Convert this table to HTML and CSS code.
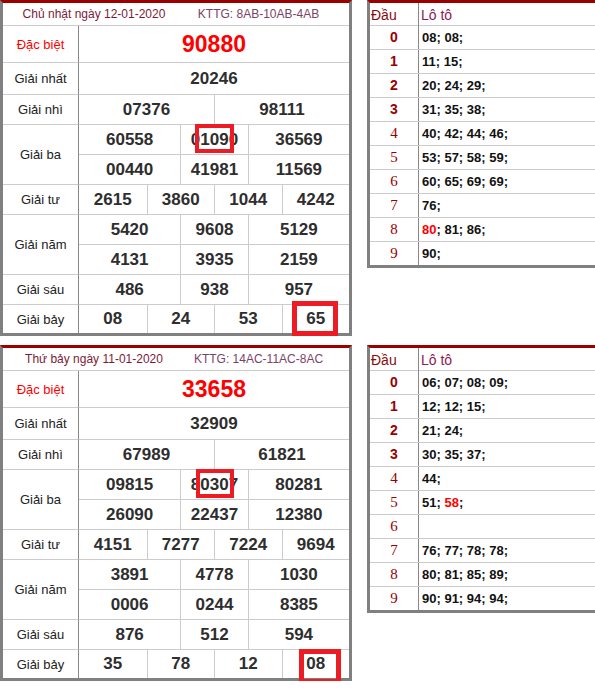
FILE: index.html
```html
<!DOCTYPE html>
<html lang="vi">
<head>
<meta charset="utf-8">
<title>Kết quả xổ số</title>
<link rel="stylesheet" href="styles.css">
</head>
<body>
<div class="page">
  <section class="day">
    <div class="kq">
      <div class="kq-head">
        <span class="date">Chủ nhật ngày 12-01-2020</span>
        <span class="kttg">KTTG: 8AB-10AB-4AB</span>
      </div>
      <div class="kq-grid">
        <div class="lbl db">Đặc biệt</div>
        <div class="c s8 first num big">90880</div>

        <div class="lbl">Giải nhất</div>
        <div class="c s8 first num">20246</div>

        <div class="lbl">Giải nhì</div>
        <div class="c s4 first num">07376</div>
        <div class="c s4 num">98111</div>

        <div class="lbl r2">Giải ba</div>
        <div class="c s3 first num">60558</div>
        <div class="c s2 num">01090</div>
        <div class="c s3 num">36569</div>
        <div class="c s3 first num">00440</div>
        <div class="c s2 num">41981</div>
        <div class="c s3 num">11569</div>

        <div class="lbl">Giải tư</div>
        <div class="c s2 first num">2615</div>
        <div class="c s2 num">3860</div>
        <div class="c s2 num">1044</div>
        <div class="c s2 num">4242</div>

        <div class="lbl r2">Giải năm</div>
        <div class="c s3 first num">5420</div>
        <div class="c s2 num">9608</div>
        <div class="c s3 num">5129</div>
        <div class="c s3 first num">4131</div>
        <div class="c s2 num">3935</div>
        <div class="c s3 num">2159</div>

        <div class="lbl">Giải sáu</div>
        <div class="c s3 first num">486</div>
        <div class="c s2 num">938</div>
        <div class="c s3 num">957</div>

        <div class="lbl last">Giải bảy</div>
        <div class="c s2 first num last">08</div>
        <div class="c s2 num last">24</div>
        <div class="c s2 num last">53</div>
        <div class="c s2 num last">65</div>
      </div>
      <span class="mark mark-a"></span>
      <span class="mark mark-b"></span>
    </div>

    <div class="loto">
      <div class="lt-head">
        <div class="lt-dau">Đầu</div>
        <div class="lt-title">Lô tô</div>
      </div>
      <div class="lt-row"><div class="d b">0</div><div class="v">08; 08;</div></div>
      <div class="lt-row"><div class="d b">1</div><div class="v">11; 15;</div></div>
      <div class="lt-row"><div class="d b">2</div><div class="v">20; 24; 29;</div></div>
      <div class="lt-row"><div class="d b">3</div><div class="v">31; 35; 38;</div></div>
      <div class="lt-row"><div class="d">4</div><div class="v">40; 42; 44; 46;</div></div>
      <div class="lt-row"><div class="d">5</div><div class="v">53; 57; 58; 59;</div></div>
      <div class="lt-row"><div class="d">6</div><div class="v">60; 65; 69; 69;</div></div>
      <div class="lt-row"><div class="d">7</div><div class="v">76;</div></div>
      <div class="lt-row"><div class="d">8</div><div class="v"><span class="hot">80</span>; 81; 86;</div></div>
      <div class="lt-row"><div class="d">9</div><div class="v">90;</div></div>
    </div>
  </section>

  <section class="day">
    <div class="kq">
      <div class="kq-head">
        <span class="date">Thứ bảy ngày 11-01-2020</span>
        <span class="kttg">KTTG: 14AC-11AC-8AC</span>
      </div>
      <div class="kq-grid">
        <div class="lbl db">Đặc biệt</div>
        <div class="c s8 first num big">33658</div>

        <div class="lbl">Giải nhất</div>
        <div class="c s8 first num">32909</div>

        <div class="lbl">Giải nhì</div>
        <div class="c s4 first num">67989</div>
        <div class="c s4 num">61821</div>

        <div class="lbl r2">Giải ba</div>
        <div class="c s3 first num">09815</div>
        <div class="c s2 num">80307</div>
        <div class="c s3 num">80281</div>
        <div class="c s3 first num">26090</div>
        <div class="c s2 num">22437</div>
        <div class="c s3 num">12380</div>

        <div class="lbl">Giải tư</div>
        <div class="c s2 first num">4151</div>
        <div class="c s2 num">7277</div>
        <div class="c s2 num">7224</div>
        <div class="c s2 num">9694</div>

        <div class="lbl r2">Giải năm</div>
        <div class="c s3 first num">3891</div>
        <div class="c s2 num">4778</div>
        <div class="c s3 num">1030</div>
        <div class="c s3 first num">0006</div>
        <div class="c s2 num">0244</div>
        <div class="c s3 num">8385</div>

        <div class="lbl">Giải sáu</div>
        <div class="c s3 first num">876</div>
        <div class="c s2 num">512</div>
        <div class="c s3 num">594</div>

        <div class="lbl last">Giải bảy</div>
        <div class="c s2 first num last">35</div>
        <div class="c s2 num last">78</div>
        <div class="c s2 num last">12</div>
        <div class="c s2 num last">08</div>
      </div>
      <span class="mark mark-c"></span>
      <span class="mark mark-d"></span>
    </div>

    <div class="loto">
      <div class="lt-head">
        <div class="lt-dau">Đầu</div>
        <div class="lt-title">Lô tô</div>
      </div>
      <div class="lt-row"><div class="d b">0</div><div class="v">06; 07; 08; 09;</div></div>
      <div class="lt-row"><div class="d b">1</div><div class="v">12; 12; 15;</div></div>
      <div class="lt-row"><div class="d b">2</div><div class="v">21; 24;</div></div>
      <div class="lt-row"><div class="d b">3</div><div class="v">30; 35; 37;</div></div>
      <div class="lt-row"><div class="d">4</div><div class="v">44;</div></div>
      <div class="lt-row"><div class="d">5</div><div class="v">51; <span class="hot">58</span>;</div></div>
      <div class="lt-row"><div class="d">6</div><div class="v"></div></div>
      <div class="lt-row"><div class="d">7</div><div class="v">76; 77; 78; 78;</div></div>
      <div class="lt-row"><div class="d">8</div><div class="v">80; 81; 85; 89;</div></div>
      <div class="lt-row"><div class="d">9</div><div class="v">90; 91; 94; 94;</div></div>
    </div>
  </section>
</div>
</body>
</html>
```

FILE: styles.css
```css
* { box-sizing: border-box; }

html, body {
  margin: 0;
  padding: 0;
  background: #fff;
  overflow: hidden;
}

body {
  font-family: "Liberation Sans", Arial, sans-serif;
  color: #222;
}

.page {
  display: flex;
  flex-direction: column;
  gap: 9px;
  width: 595px;
}

.day {
  display: flex;
  align-items: flex-start;
  gap: 15px;
}

/* ---------- result table ---------- */
.kq {
  position: relative;
  width: 352px;
  flex: none;
  border-top: 3px solid #9b0000;
  border-left: 3px solid #808080;
  border-right: 3px solid #808080;
  border-bottom: 3px solid #808080;
}

.kq-head {
  display: flex;
  align-items: center;
  height: 23px;
  border-bottom: 1px solid #cccccc;
  font-size: 12px;
}

.kq-head .date {
  width: 182px;
  text-align: center;
  color: #7d1a36;
}

.kq-head .kttg {
  width: 147px;
  text-align: center;
  color: #7a4466;
}

.kq-grid {
  display: grid;
  grid-template-columns: 76px repeat(8, 1fr);
  grid-template-rows: 37px 32px 30px 30px 30px 30px 30px 30px 30px 28px;
}

.lbl {
  grid-column: 1;
  display: flex;
  align-items: center;
  justify-content: center;
  font-size: 13px;
  color: #222;
  border-right: 1px solid #888888;
  border-bottom: 1px solid #cccccc;
}

.lbl.db { color: #ff0000; }
.lbl.r2 { grid-row: span 2; }

.c {
  display: flex;
  align-items: center;
  justify-content: center;
  border-left: 1px solid #cccccc;
  border-bottom: 1px solid #cccccc;
}

.c.first { border-left: 0; }
.last { border-bottom: 0; }

.s8 { grid-column: span 8; }
.s4 { grid-column: span 4; }
.s3 { grid-column: span 3; }
.s2 { grid-column: span 2; }

.num {
  font-size: 17px;
  font-weight: bold;
  color: #2e2e2e;
}

.num.big {
  font-size: 23px;
  color: #ff0000;
}

.mark {
  position: absolute;
  border: 4px solid #ed1c24;
  pointer-events: none;
}

.mark-a { left: 192px; top: 121px; width: 39px; height: 29px; }
.mark-b { left: 289px; top: 298px; width: 46px; height: 35px; border-width: 5px; }
.mark-c { left: 193px; top: 121px; width: 38px; height: 29px; }
.mark-d { left: 296px; top: 301px; width: 42px; height: 35px; border-width: 5px; }

/* ---------- lo to table ---------- */
.loto {
  flex: 1;
  min-width: 230px;
  border-top: 3px solid #9b0000;
  border-left: 3px solid #808080;
  border-bottom: 3px solid #808080;
}

.lt-head,
.lt-row {
  display: grid;
  grid-template-columns: 49px 1fr;
  border-bottom: 1px solid #cccccc;
}

.lt-head { height: 23px; }
.lt-row { height: 24px; }
.lt-row:last-child { border-bottom: 0; height: 23px; }

.lt-head .lt-dau,
.lt-row .d {
  border-right: 1px solid #888888;
}

.lt-dau {
  padding-left: 1px;
  font-size: 14px;
  line-height: 24px;
  color: #8b0a0a;
}

.lt-title {
  padding-left: 2px;
  font-size: 14px;
  line-height: 24px;
  color: #8b1a55;
}

.lt-row .d {
  text-align: center;
  font-family: "Liberation Serif", "Times New Roman", serif;
  font-size: 15px;
  line-height: 23px;
  color: #990000;
}

.lt-row .d.b {
  font-family: "Liberation Sans", Arial, sans-serif;
  font-weight: bold;
  font-size: 14px;
}

.lt-row .v {
  padding-left: 3px;
  font-size: 13px;
  line-height: 23px;
  font-weight: bold;
  color: #111;
}

.hot { color: #ff0000; }
```
